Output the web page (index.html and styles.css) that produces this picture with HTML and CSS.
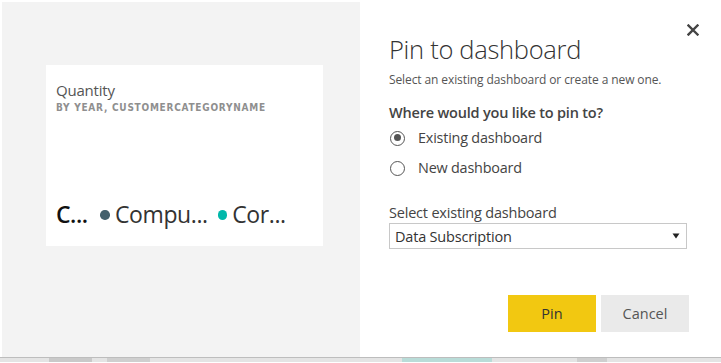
FILE: index.html
```html
<!DOCTYPE html>
<html>
<head>
<meta charset="utf-8">
<link rel="stylesheet" href="styles.css">
</head>
<body>
<div class="frame">
  <div class="preview">
    <div class="card">
      <div class="card-title">Quantity</div>
      <div class="card-sub">BY YEAR, CUSTOMERCATEGORYNAME</div>
      <div class="legend">
        <span class="legend-head">C...</span>
        <span class="legend-item"><span class="dot dot-slate"></span>Compu...</span>
        <span class="legend-item"><span class="dot dot-teal"></span>Cor...</span>
      </div>
    </div>
  </div>
  <div class="dialog">
    <button class="close" aria-label="Close">
      <svg width="12" height="12" viewBox="0 0 12 12"><path d="M1.5 1.5 L10.5 10.5 M10.5 1.5 L1.5 10.5" stroke="#444" stroke-width="2.4" stroke-linecap="square"/></svg>
    </button>
    <h1 class="title">Pin to dashboard</h1>
    <p class="subtitle">Select an existing dashboard or create a new one.</p>
    <div class="question">Where would you like to pin to?</div>
    <div class="radios">
      <label class="radio"><span class="radio-circle checked"></span>Existing dashboard</label>
      <label class="radio"><span class="radio-circle"></span>New dashboard</label>
    </div>
    <div class="field-label">Select existing dashboard</div>
    <div class="select">
      <span>Data Subscription</span>
      <svg width="8" height="6" viewBox="0 0 8 6"><path d="M0.5 0.5 L7.5 0.5 L4 5.5 Z" fill="#222"/></svg>
    </div>
    <div class="actions">
      <button class="btn btn-pin">Pin</button>
      <button class="btn btn-cancel">Cancel</button>
    </div>
  </div>
</div>
<div class="taskbar">
  <span class="seg seg-a"></span>
  <span class="seg seg-b"></span>
  <span class="seg seg-c"></span>
  <span class="seg seg-d"></span>
</div>
</body>
</html>
```
FILE: styles.css
```css
* { box-sizing: border-box; }
html, body { margin: 0; padding: 0; }
body {
  width: 721px;
  height: 363px;
  overflow: hidden;
  background: #fff;
  font-family: "Open Sans", "Noto Sans", sans-serif;
  color: #333;
}
.frame {
  display: grid;
  grid-template-columns: 358px 1fr;
  height: 358px;
  padding: 2px 0 0 2px;
  border-bottom: 1px solid #bdbdbd;
}
.preview {
  background: #f3f3f3;
  padding: 63px 0 0 44px;
}
.card {
  width: 277px;
  height: 181px;
  background: #fff;
  padding: 16px 0 0 10px;
  display: flex;
  flex-direction: column;
}
.card-title {
  font-size: 15px;
  line-height: 18px;
  color: #555;
  letter-spacing: -0.2px;
}
.card-sub {
  font-family: "DejaVu Sans Condensed", "DejaVu Sans", sans-serif;
  font-weight: bold;
  font-size: 10px;
  line-height: 12px;
  color: #8f8f8f;
  letter-spacing: 0.75px;
  margin-top: 3px;
}
.legend {
  margin-top: 87px;
  display: flex;
  align-items: center;
  font-size: 23px;
  line-height: 26px;
  color: #333;
}
.legend-head {
  font-weight: 600;
  color: #111;
  margin-right: 13px;
  letter-spacing: -0.5px;
}
.legend-item {
  display: flex;
  align-items: center;
  margin-right: 10px;
  letter-spacing: -0.4px;
}
.dot {
  display: inline-block;
  width: 9.5px;
  height: 9.5px;
  border-radius: 50%;
  margin-right: 5px;
  margin-top: 2px;
}
.dot-slate { background: #44606c; }
.dot-teal { background: #01b8aa; }

.dialog {
  position: relative;
  background: #fff;
  padding: 30px 0 0 29px;
}
.close {
  position: absolute;
  top: 22px;
  right: 22px;
  border: 0;
  background: none;
  padding: 0;
  width: 12px;
  height: 12px;
  display: flex;
}
.title {
  margin: 0;
  font-weight: 300;
  font-size: 25.5px;
  line-height: 34px;
  color: #333;
  letter-spacing: -0.3px;
}
.subtitle {
  margin: 6px 0 0;
  font-size: 12px;
  line-height: 16px;
  color: #555;
  letter-spacing: -0.1px;
}
.question {
  margin-top: 15px;
  font-size: 14.5px;
  line-height: 20px;
  font-weight: 600;
  color: #444;
  letter-spacing: -0.2px;
}
.radios {
  display: flex;
  flex-direction: column;
  gap: 10px;
  margin-top: 5px;
}
.radio {
  display: flex;
  align-items: center;
  font-size: 14.4px;
  line-height: 20px;
  color: #444;
  letter-spacing: -0.2px;
}
.radio-circle {
  width: 15px;
  height: 15px;
  border: 1.5px solid #555;
  border-radius: 50%;
  margin: 0 13px 0 1px;
  position: relative;
}
.radio-circle.checked::after {
  content: "";
  position: absolute;
  left: 2.5px;
  top: 2.5px;
  width: 7px;
  height: 7px;
  border-radius: 50%;
  background: #555;
}
.field-label {
  margin-top: 26px;
  font-size: 14.5px;
  line-height: 18px;
  color: #444;
  letter-spacing: -0.2px;
}
.select {
  margin-top: 1px;
  width: 298px;
  height: 26px;
  border: 1px solid #c8c8c8;
  display: flex;
  align-items: center;
  justify-content: space-between;
  padding: 0 6px 0 5px;
  font-size: 14.5px;
  color: #333;
  letter-spacing: -0.2px;
}
.actions {
  display: flex;
  gap: 5px;
  margin: 46px 0 0 119px;
}
.btn {
  width: 88px;
  height: 37px;
  border: 0;
  font-family: inherit;
  font-size: 14.5px;
  color: #333;
  padding: 0;
}
.btn-pin { background: #f2c811; }
.btn-cancel { background: #eaeaea; color: #555; }

.taskbar {
  display: flex;
  height: 4px;
  background: #e4e4e4;
}
.seg { display: block; height: 4px; }
.seg-a { width: 43px; margin-left: 49px; background: #c9c9c9; }
.seg-b { width: 43px; margin-left: 15px; background: #cfcfcf; }
.seg-c { width: 90px; margin-left: 252px; background: #b9dcd8; }
.seg-d { width: 30px; margin-left: 85px; background: #cfcfcf; }
```
